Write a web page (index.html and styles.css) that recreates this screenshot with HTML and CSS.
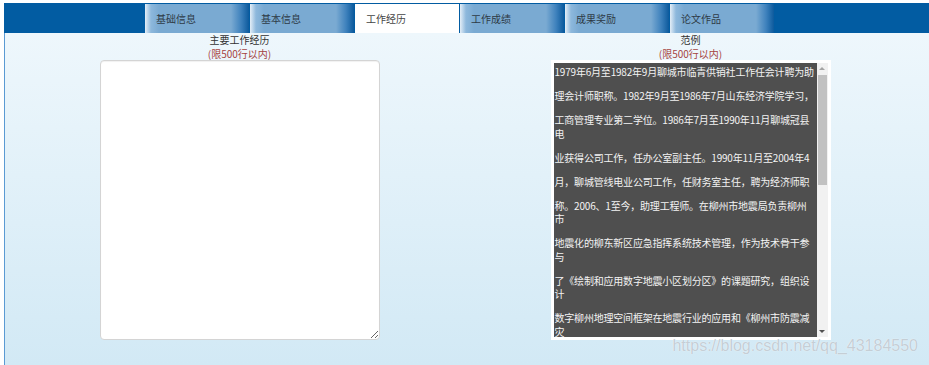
FILE: index.html
```html
<!DOCTYPE html>
<html lang="zh-CN">
<head>
    <meta charset="UTF-8">
    <title>工作经历</title>
    <link rel="stylesheet" href="styles.css">
</head>
<body>
<div class="page">
    <ul class="tabs">
        <li class="tab">基础信息</li>
        <li class="tab">基本信息</li>
        <li class="tab current">工作经历</li>
        <li class="tab">工作成绩</li>
        <li class="tab">成果奖励</li>
        <li class="tab">论文作品</li>
    </ul>
    <div class="panel">
        <div class="col">
            <div class="label">主要工作经历</div>
            <div class="limit">(限500行以内)</div>
            <textarea class="editor"></textarea>
        </div>
        <div class="col">
            <div class="label">范例</div>
            <div class="limit">(限500行以内)</div>
            <div class="sample">
                <div class="sample-text">
                    <p>1979年6月至1982年9月聊城市临青供销社工作任会计聘为助</p>
                    <p>理会计师职称。1982年9月至1986年7月山东经济学院学习，</p>
                    <p>工商管理专业第二学位。1986年7月至1990年11月聊城冠县<br>电</p>
                    <p>业获得公司工作，任办公室副主任。1990年11月至2004年4</p>
                    <p>月，聊城管线电业公司工作，任财务室主任，聘为经济师职</p>
                    <p>称。2006、1至今，助理工程师。在柳州市地震局负责柳州<br>市</p>
                    <p>地震化的柳东新区应急指挥系统技术管理，作为技术骨干参<br>与</p>
                    <p>了《绘制和应用数字地震小区划分区》的课题研究，组织设<br>计</p>
                    <p>数字柳州地理空间框架在地震行业的应用和《柳州市防震减<br>灾</p>
                </div>
                <div class="scrollbar">
                    <span class="arrow up"></span>
                    <span class="thumb"></span>
                    <span class="rest"></span>
                    <span class="arrow down"></span>
                </div>
            </div>
        </div>
    </div>
    <div class="watermark">https://blog.csdn.net/qq_43184550</div>
</div>
</body>
</html>
```
FILE: styles.css
```css
* {
    margin: 0;
    padding: 0;
    list-style: none;
    box-sizing: border-box;
}

body {
    font-family: "Noto Sans CJK SC", "Liberation Sans", sans-serif;
    font-size: 10px;
    color: #333333;
    background-color: #ffffff;
    overflow: hidden;
}

.page {
    position: relative;
    margin: 3px 0 0 4px;
    height: 362px;
    display: flex;
    flex-direction: column;
}

/* 顶部标签栏 */
.tabs {
    display: flex;
    height: 30px;
    padding: 1px 0 0 141px;
    background-color: #025ca2;
}

.tab {
    width: 104px;
    height: 29px;
    margin-right: 1px;
    padding-left: 11px;
    line-height: 29px;
    color: #2e3a46;
    background: linear-gradient(to right, #e4eef7 0, #8db8dc 6px, #7aaad2 14px, #7aaad2 calc(100% - 18px), #3f82bd calc(100% - 8px), #0c5a9d 100%);
    cursor: pointer;
}

.tab.current {
    background: #ffffff;
    color: #444444;
}

/* 内容区 */
.panel {
    flex: 1;
    display: grid;
    grid-template-columns: 451px 451px;
    padding-left: 9px;
    border-left: 1px solid #5a9ad3;
    background: linear-gradient(#eef7fc, #d2e9f5);
}

.col {
    text-align: center;
}

.label {
    line-height: 13.5px;
    color: #333333;
}

.limit {
    line-height: 13.5px;
    color: #a5433f;
}

.editor {
    display: block;
    width: 280px;
    height: 280px;
    margin: 0 auto;
    border: 1px solid #d4d4d4;
    border-radius: 4px;
    background-color: #ffffff;
    box-shadow: inset 0 1px 1px rgba(0, 0, 0, 0.06);
    outline: none;
}

.sample {
    display: flex;
    width: 280px;
    height: 280px;
    margin: 0 auto;
    padding: 3px;
    background-color: #ffffff;
    text-align: left;
}

.sample-text {
    flex: 1;
    overflow: hidden;
    padding: 2px 0 0 1px;
    background-color: #4f4f4f;
    color: #f3f3f3;
    white-space: nowrap;
    letter-spacing: -0.2px;
}

.sample-text p {
    line-height: 13.5px;
    margin-bottom: 10.5px;
}

/* 滚动条 */
.scrollbar {
    width: 11px;
    display: flex;
    flex-direction: column;
    background-color: #f1f1f1;
}

.arrow {
    height: 11px;
    display: flex;
    align-items: center;
    justify-content: center;
}

.arrow:after {
    content: "";
    border-left: 3px solid transparent;
    border-right: 3px solid transparent;
}

.up:after {
    border-bottom: 3px solid #a3a3a3;
}

.down:after {
    border-top: 3px solid #505050;
}

.thumb {
    height: 110px;
    margin: 1px 1px 0;
    background-color: #c1c1c1;
}

.rest {
    flex: 1;
}

.watermark {
    position: absolute;
    right: 11px;
    top: 334px;
    font-family: "Liberation Sans", sans-serif;
    font-size: 16px;
    line-height: 18px;
    color: rgba(190, 200, 208, 0.9);
    text-shadow: 0 0 1px #ffffff;
}
```
